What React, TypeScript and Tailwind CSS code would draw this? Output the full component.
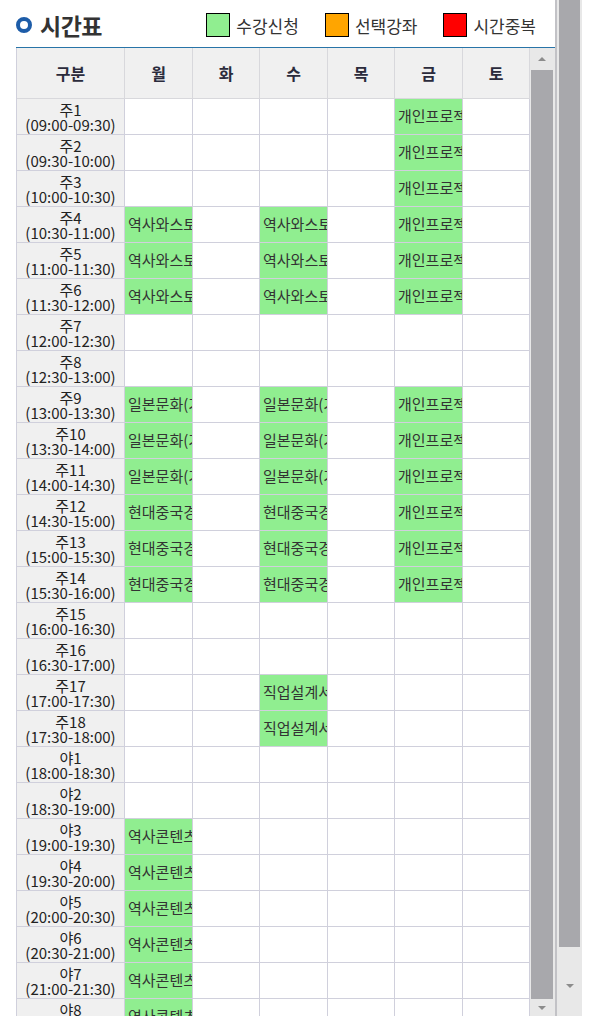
import clsx from "clsx";

const DAYS = ["월", "화", "수", "목", "금", "토"];
const COLS = "grid-cols-[108px_68px_67px_68px_67px_68px_67px]";

const pad = (n: number) => String(n).padStart(2, "0");
const fmt = (m: number) => `${pad(Math.floor(m / 60))}:${pad(m % 60)}`;

const ROWS = Array.from({ length: 26 }, (_, i) => {
    const start = 9 * 60 + i * 30;
    const label = i < 18 ? `주${i + 1}` : `야${i - 17}`;
    return { label, time: `(${fmt(start)}-${fmt(start + 30)})` };
});

const range = (a: number, b: number) => Array.from({ length: b - a + 1 }, (_, i) => a + i);

// day index -> row index -> course name
const COURSES: Record<number, Record<number, string>> = { 0: {}, 2: {}, 4: {} };
range(3, 5).forEach(r => { COURSES[0][r] = "역사와스토리텔링"; COURSES[2][r] = "역사와스토리텔링"; });
range(8, 10).forEach(r => { COURSES[0][r] = "일본문화(기초)"; COURSES[2][r] = "일본문화(기초)"; });
range(11, 13).forEach(r => { COURSES[0][r] = "현대중국경제"; COURSES[2][r] = "현대중국경제"; });
range(16, 17).forEach(r => { COURSES[2][r] = "직업설계서비스"; });
range(20, 25).forEach(r => { COURSES[0][r] = "역사콘텐츠기획"; });
[...range(0, 5), ...range(8, 13)].forEach(r => { COURSES[4][r] = "개인프로젝트"; });

const LEGEND = [
    { label: "수강신청", color: "bg-[#90ee90]" },
    { label: "선택강좌", color: "bg-[#ffa500]" },
    { label: "시간중복", color: "bg-[#ff0000]" },
];

const Arrow = ({ up }: { up?: boolean }) => (
    <div
        className={clsx(
            "w-0 h-0 border-l-[4px] border-r-[4px] border-l-transparent border-r-transparent",
            up ? "border-b-[4px] border-b-[#8c8c8c]" : "border-t-[4px] border-t-[#8c8c8c]"
        )}
    />
);

export default function App() {
    return (
        <div className="flex h-[1016px] w-[582px] overflow-hidden bg-white font-['Noto_Sans_CJK_KR','Noto_Sans',sans-serif] text-[#333]">
            <div className="w-[555px] flex flex-col pl-4">
                <div className="h-[47px] shrink-0 flex items-center pt-[3px]">
                    <div className="w-4 h-4 rounded-full border-[4px] border-[#1d5ca8] mr-2" />
                    <span className="text-[23px] font-bold leading-none tracking-[-0.5px]">시간표</span>
                    <div className="ml-auto flex items-center gap-[26px] pr-[19px]">
                        {LEGEND.map(l => (
                            <div key={l.label} className="flex items-center gap-[6px]">
                                <span className={clsx("w-6 h-6 border border-black", l.color)} />
                                <span className="text-[17px] leading-none">{l.label}</span>
                            </div>
                        ))}
                    </div>
                </div>

                <div className="flex-1 flex border-t border-[#2874a8] min-h-0">
                    <div className="w-[514px] overflow-hidden border-l border-[#d0d0dc]">
                        <div className={clsx("grid h-[51px] bg-[#f0f0f0]", COLS)}>
                            {["구분", ...DAYS].map(h => (
                                <div key={h} className="flex items-center justify-center border-r border-b border-[#d8d8dc] text-[16px] font-bold text-[#2b2b3c]">
                                    {h}
                                </div>
                            ))}
                        </div>
                        {ROWS.map((row, r) => (
                            <div key={row.label} className={clsx("grid h-9", COLS)}>
                                <div className="flex flex-col items-center justify-center bg-[#f0f0f0] border-r border-b border-[#d0d0dc] text-[15px] leading-[15px] text-[#222]">
                                    <span>{row.label}</span>
                                    <span>{row.time}</span>
                                </div>
                                {DAYS.map((d, c) => {
                                    const name = COURSES[c]?.[r];
                                    return (
                                        <div
                                            key={d}
                                            className={clsx(
                                                "flex items-center px-[3px] border-r border-b border-[#d0d0dc] overflow-hidden whitespace-nowrap text-[15px] text-[#333]",
                                                name ? "bg-[#90ee90]" : "bg-white"
                                            )}
                                        >
                                            {name}
                                        </div>
                                    );
                                })}
                            </div>
                        ))}
                    </div>
                    {/* inner scrollbar */}
                    <div className="w-[25px] flex flex-col bg-[#e8e8e8]">
                        <div className="h-[22px] flex items-center justify-center pr-[2px]"><Arrow up /></div>
                        <div className="ml-px mr-[2px] h-[929px] bg-[#a8a8ac]" />
                        <div className="flex-1 flex items-center justify-center pr-[2px]"><Arrow /></div>
                    </div>
                </div>
            </div>
            {/* page scrollbar */}
            <div className="w-[27px] flex flex-col bg-[#e8e8e8] border-l-2 border-[#c2c2c6]">
                <div className="ml-[2px] mr-[2px] h-[947px] bg-[#a8a8ac]" />
                <div className="flex-1 flex items-center justify-center pt-[8px]"><Arrow /></div>
            </div>
        </div>
    );
}
